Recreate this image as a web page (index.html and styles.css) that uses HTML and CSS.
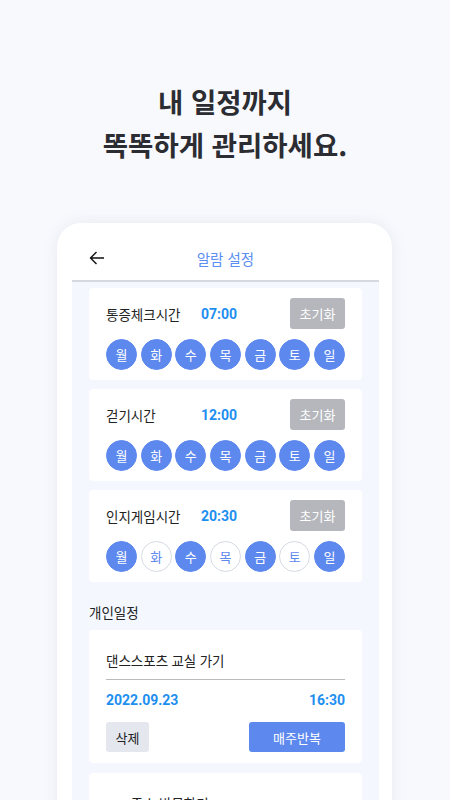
FILE: index.html
```html
<!DOCTYPE html>
<html lang="ko">
  <head>
    <meta charset="UTF-8">
    <meta name="viewport" content="width=device-width, initial-scale=1.0">
    <title>알람 설정</title>
    <link rel="stylesheet" href="styles.css">
  </head>
  <body>
    <h1 class="headline">내 일정까지<br>똑똑하게 관리하세요.</h1>

    <div class="phone">
      <div class="top-bar">
        <svg class="back" width="16" height="16" viewBox="0 0 16 16">
          <path d="M15 8H1.5M7.5 2L1.5 8l6 6" fill="none" stroke="#111" stroke-width="1.4"/>
        </svg>
        <span class="top-title">알람 설정</span>
      </div>

      <div class="panel">
        <div class="card alarm">
          <div class="alarm-row">
            <span class="alarm-name">통증체크시간</span>
            <span class="alarm-time">07:00</span>
            <button class="reset">초기화</button>
          </div>
          <div class="days">
            <span class="day on">월</span><span class="day on">화</span><span class="day on">수</span><span class="day on">목</span><span class="day on">금</span><span class="day on">토</span><span class="day on">일</span>
          </div>
        </div>

        <div class="card alarm">
          <div class="alarm-row">
            <span class="alarm-name">걷기시간</span>
            <span class="alarm-time">12:00</span>
            <button class="reset">초기화</button>
          </div>
          <div class="days">
            <span class="day on">월</span><span class="day on">화</span><span class="day on">수</span><span class="day on">목</span><span class="day on">금</span><span class="day on">토</span><span class="day on">일</span>
          </div>
        </div>

        <div class="card alarm">
          <div class="alarm-row">
            <span class="alarm-name">인지게임시간</span>
            <span class="alarm-time">20:30</span>
            <button class="reset">초기화</button>
          </div>
          <div class="days">
            <span class="day on">월</span><span class="day">화</span><span class="day on">수</span><span class="day">목</span><span class="day on">금</span><span class="day">토</span><span class="day on">일</span>
          </div>
        </div>

        <div class="section-label">개인일정</div>

        <div class="card plan">
          <div class="plan-title">댄스스포츠 교실 가기</div>
          <div class="plan-when">
            <span>2022.09.23</span>
            <span>16:30</span>
          </div>
          <div class="plan-actions">
            <button class="delete">삭제</button>
            <button class="repeat">매주반복</button>
          </div>
        </div>

        <div class="card plan next">
          <div class="plan-title">ㅇㅇ주소 방문하기</div>
        </div>
      </div>
    </div>
  </body>
</html>
```

FILE: styles.css
```css
body {
  margin: 0;
  background-color: #f8f9fd;
  font-family: Roboto, "Noto Sans CJK KR", sans-serif;
  color: #222;
  overflow: hidden;
  height: 800px;
}

.headline {
  margin: 80px 0 0;
  text-align: center;
  font-family: "Noto Sans CJK KR", sans-serif;
  font-size: 27.5px;
  line-height: 43px;
  font-weight: 700;
  color: #2b2d33;
}

.phone {
  margin: 57px 0 0 57px;
  width: 335px;
  height: 700px;
  box-sizing: border-box;
  padding: 0 13px 0 15px;
  background-color: #fff;
  border-radius: 24px 24px 0 0;
  box-shadow: 0 0 14px rgba(210, 215, 230, 0.45);
}

.top-bar {
  position: relative;
  height: 43px;
  padding-top: 14px;
  display: flex;
  align-items: center;
  justify-content: center;
  border-bottom: 2px solid #d6d8dd;
}

.back {
  position: absolute;
  left: 17px;
  top: 27px;
}

.top-title {
  font-family: "Noto Sans CJK KR", sans-serif;
  font-size: 14.5px;
  color: #5a8ef2;
}

.panel {
  background-color: #f4f7fe;
  padding: 6px 17px 0;
  height: 600px;
}

.card {
  background-color: #fff;
  border-radius: 4px;
  padding: 10px 17px;
}

.alarm {
  margin-bottom: 9px;
}

.alarm-row {
  display: flex;
  align-items: center;
  height: 31px;
}

.alarm-name {
  width: 95px;
  font-size: 13.5px;
}

.alarm-time {
  flex: 1;
  font-size: 14px;
  font-weight: 700;
  color: #1e8ff0;
}

.reset {
  width: 55px;
  height: 31px;
  border: none;
  border-radius: 3px;
  background-color: #b5b7bc;
  color: #fff;
  font-family: "Noto Sans CJK KR", sans-serif;
  font-size: 13px;
  padding: 0;
}

.days {
  display: flex;
  justify-content: space-between;
  margin-top: 10px;
}

.day {
  width: 31px;
  height: 31px;
  box-sizing: border-box;
  border-radius: 50%;
  display: flex;
  align-items: center;
  justify-content: center;
  font-size: 13px;
  color: #5d88ee;
  background-color: #fff;
  border: 1px solid #d6dae3;
}

.day.on {
  background-color: #5d88ee;
  border-color: #5d88ee;
  color: #fff;
}

.section-label {
  font-size: 13.5px;
  line-height: 20px;
  padding: 12px 0 7px;
}

.plan {
  padding: 20px 17px 11px;
  margin-bottom: 10px;
}

.plan-title {
  font-size: 13.5px;
  line-height: 22px;
  padding-bottom: 7px;
  border-bottom: 1px solid #b9bbbf;
}

.next .plan-title {
  border-bottom: none;
}

.plan-when {
  display: flex;
  justify-content: space-between;
  margin-top: 11px;
  font-size: 14px;
  line-height: 18px;
  font-weight: 700;
  color: #1e8ff0;
}

.plan-actions {
  display: flex;
  justify-content: space-between;
  margin-top: 13px;
}

.plan-actions button {
  height: 30px;
  border: none;
  border-radius: 3px;
  font-family: "Noto Sans CJK KR", sans-serif;
  font-size: 13px;
  padding: 0;
}

.delete {
  width: 43px;
  background-color: #e4e7ee;
  color: #222;
}

.repeat {
  width: 96px;
  background-color: #5d88ee;
  color: #fff;
}
```
